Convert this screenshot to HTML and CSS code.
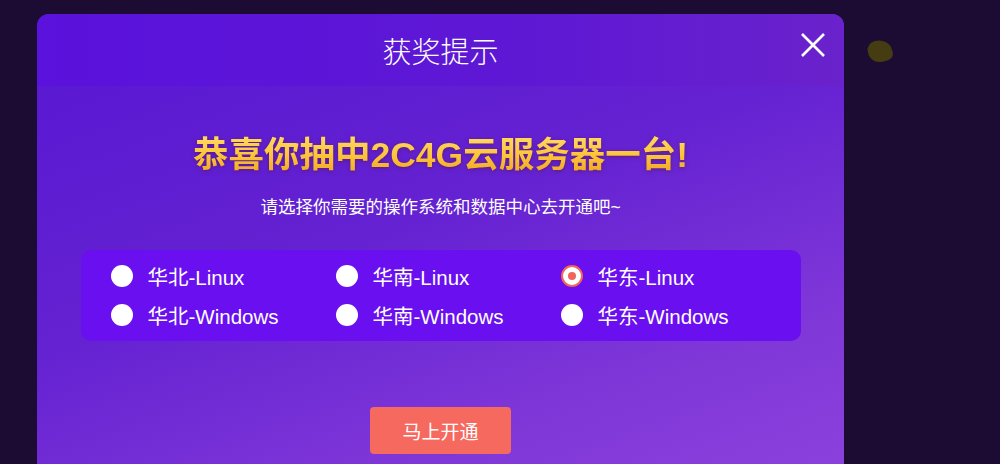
FILE: index.html
```html
<!DOCTYPE html>
<html lang="zh-CN">
<head>
  <meta charset="UTF-8">
  <meta name="viewport" content="width=device-width, initial-scale=1.0">
  <title>获奖提示</title>
  <link rel="stylesheet" href="styles.css">
</head>
<body>
  <div class="leaf"></div>
  <div class="modal">
    <div class="modal-header">
      <h2>获奖提示</h2>
      <span class="close-btn">
        <svg width="26" height="26" viewBox="0 0 26 26"><path d="M2 2 L24 24 M24 2 L2 24" stroke="#fff" stroke-width="2.6" fill="none"/></svg>
      </span>
    </div>
    <div class="modal-body">
      <div class="prize-title">恭喜你抽中2C4G云服务器一台!</div>
      <div class="prize-sub">请选择你需要的操作系统和数据中心去开通吧~</div>
      <div class="options">
        <label class="option"><span class="radio"></span>华北-Linux</label>
        <label class="option"><span class="radio"></span>华南-Linux</label>
        <label class="option"><span class="radio checked"></span>华东-Linux</label>
        <label class="option"><span class="radio"></span>华北-Windows</label>
        <label class="option"><span class="radio"></span>华南-Windows</label>
        <label class="option"><span class="radio"></span>华东-Windows</label>
      </div>
      <button class="open-button">马上开通</button>
    </div>
  </div>
</body>
</html>
```

FILE: styles.css
```css
body {
  margin: 0;
  padding: 14px 0 0 37px;
  width: 1000px;
  height: 464px;
  box-sizing: border-box;
  overflow: hidden;
  background-color: #1c0c33;
  font-family: "Liberation Sans", "Noto Sans CJK SC", sans-serif;
  position: relative;
}

.leaf {
  position: absolute;
  left: 868px;
  top: 40px;
  width: 24px;
  height: 22px;
  background: #463c12;
  border-radius: 40% 60% 30% 50%;
  transform: rotate(-15deg);
}

.modal {
  width: 807px;
  height: 470px;
  border-radius: 12px 12px 0 0;
  overflow: hidden;
  background: linear-gradient(160deg, #5717d2 0%, #6522d2 45%, #7e36d8 75%, #8c42dc 100%);
}

.modal-header {
  height: 72px;
  display: flex;
  align-items: center;
  justify-content: center;
  position: relative;
  background: linear-gradient(90deg, #5a12dc 0%, #5e18d4 60%, #6a22cc 100%);
}

.modal-header h2 {
  margin: 0;
  font-family: "Noto Sans CJK SC", sans-serif;
  font-weight: 300;
  font-size: 29px;
  color: #fff;
}

.close-btn {
  position: absolute;
  right: 18px;
  top: 18px;
  width: 26px;
  height: 26px;
}

.modal-body {
  display: flex;
  flex-direction: column;
  align-items: center;
  padding-top: 46px;
}

.prize-title {
  font-size: 35.5px;
  font-weight: 700;
  line-height: 46px;
  background: linear-gradient(180deg, #ffdd6a 0%, #fcc53a 50%, #f0a020 100%);
  -webkit-background-clip: text;
  background-clip: text;
  color: transparent;
  filter: drop-shadow(0 1px 2px rgba(80, 20, 40, 0.5));
}

.prize-sub {
  margin-top: 17px;
  font-size: 17.5px;
  line-height: 24px;
  color: #fff;
}

.options {
  margin-top: 31px;
  width: 720px;
  height: 91px;
  box-sizing: border-box;
  padding: 6px 0 0 30px;
  border-radius: 10px;
  background: #6a0ff0;
  display: grid;
  grid-template-columns: repeat(3, 225px);
  grid-auto-rows: 39px;
}

.option {
  display: flex;
  align-items: center;
  gap: 15px;
  font-size: 20.5px;
  color: #fff;
}

.radio {
  width: 22px;
  height: 22px;
  border-radius: 50%;
  background: #fff;
  box-sizing: border-box;
  position: relative;
}

.radio.checked {
  border: 2px solid #f0655a;
}

.radio.checked::after {
  content: "";
  position: absolute;
  left: 5px;
  top: 5px;
  width: 8px;
  height: 8px;
  border-radius: 50%;
  background: #f0655a;
}

.open-button {
  margin-top: 66px;
  width: 141px;
  height: 47px;
  border: none;
  border-radius: 4px;
  background: #f5695f;
  color: #fff;
  font-family: "Noto Sans CJK SC", sans-serif;
  font-size: 19px;
}
```
